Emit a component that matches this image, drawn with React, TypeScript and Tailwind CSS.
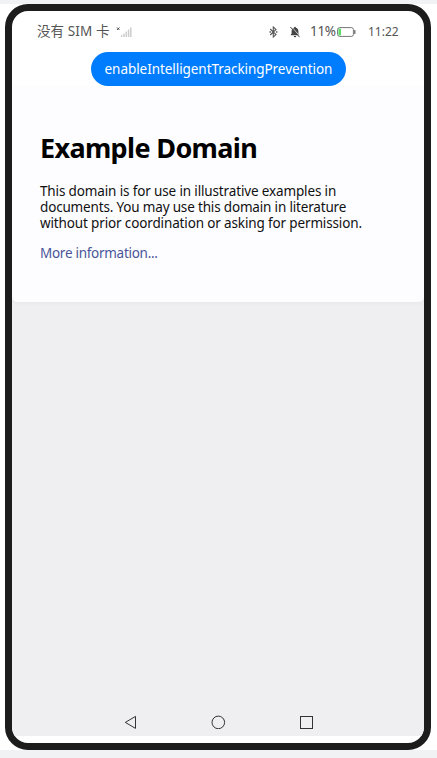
const latin = "font-['Noto_Sans','Noto_Sans_CJK_SC',sans-serif]";

function SignalIcon() {
  return (
    <svg width="16" height="12" viewBox="0 0 16 12" className="ml-[6px] mt-[1px]">
      <path d="M1 1.5l2.4 2.4M3.4 1.5L1 3.9" stroke="#444" strokeWidth="1" />
      <path d="M5.6 11V9M8 11V7.5M10.3 11V5.5M12.6 11V3.5M14.8 11V1.5" stroke="#cdcdcd" strokeWidth="1.5" />
    </svg>
  );
}

function BluetoothIcon() {
  return (
    <svg width="9" height="12" viewBox="0 0 9 12" fill="none" stroke="#555" strokeWidth="1.1">
      <path d="M1.2 3L7 8.6 4.3 11V1L7 3.4 1.2 9" />
      <path d="M0.5 6h1.4M7 6h1.4" strokeWidth="1.3" />
    </svg>
  );
}

function BellOffIcon() {
  return (
    <svg width="10" height="12" viewBox="0 0 10 12" className="ml-[12px]">
      <path d="M5 0.8c.6 0 .9.4.9.9C7.6 2.2 8.4 3.4 8.4 5v2.5L9.5 9.3H.5l1.1-1.8V5C1.6 3.4 2.4 2.2 4.1 1.7c0-.5.3-.9.9-.9zM3.8 9.9h2.4c0 .8-.5 1.3-1.2 1.3s-1.2-.5-1.2-1.3z" fill="#444" />
      <path d="M1.3 0.5l8.6 9.7" stroke="#fff" strokeWidth="0.7" />
      <path d="M0.4 1l9.2 10.2" stroke="#444" strokeWidth="1" />
    </svg>
  );
}

function BatteryIcon() {
  return (
    <svg width="19" height="10" viewBox="0 0 19 10" className="mt-[1px]">
      <rect x="0.6" y="0.6" width="15.8" height="8.8" rx="2" fill="#fff" stroke="#777" />
      <rect x="1.4" y="1.5" width="2.6" height="7" rx="0.7" fill="#5fdc68" />
      <path d="M17.8 3v4" stroke="#777" strokeWidth="1.4" />
    </svg>
  );
}

export default function App() {
  return (
    <div className={`h-[758px] w-[437px] overflow-hidden bg-[#f1f2f4] py-[4px] ${latin}`}>
      <div className="h-[746px] bg-white pl-[5px]">
        <main className="flex h-[746px] w-[426px] flex-col overflow-hidden rounded-[23px] border-[7px] border-[#1c1c1c] bg-white">
          <header className="flex h-[41px] shrink-0 items-center px-[25px] text-[13.5px] leading-none text-[#555]">
            <span className="w-[73px] whitespace-nowrap tracking-[0.1px]">没有 SIM 卡</span>
            <SignalIcon />
            <span className="grow" />
            <BluetoothIcon />
            <BellOffIcon />
            <span className="ml-[10px] w-[27px] whitespace-nowrap tracking-[-0.3px]">11%</span>
            <BatteryIcon />
            <span className="ml-[12px] w-[31px] whitespace-nowrap text-[12px]">11:22</span>
          </header>
          <button className="ml-[79px] h-[34px] w-[255px] shrink-0 whitespace-nowrap rounded-full bg-[#007dff] pt-px text-[13.5px] tracking-[-0.06px] text-white">
            enableIntelligentTrackingPrevention
          </button>
          <div className="mt-px flex h-[649px] shrink-0 flex-col bg-[#efeff1]">
            <section className="h-[215px] shrink-0 rounded-b-[5px] bg-[#fdfdff] pl-[28px] pt-[43px] shadow-[0_1px_4px_rgba(0,0,0,0.04)]">
              <h1 className="whitespace-nowrap text-[27px] font-bold leading-[36px] tracking-[-0.65px] text-black">Example Domain</h1>
              <p className="mt-[17px] whitespace-nowrap text-[13.5px] leading-[16px] text-[#111]">
                <span className="block tracking-[-0.14px]">This domain is for use in illustrative examples in</span>
                <span className="block tracking-[-0.17px]">documents. You may use this domain in literature</span>
                <span className="block tracking-[-0.14px]">without prior coordination or asking for permission.</span>
              </p>
              <a className="mt-[14px] block text-[13.5px] leading-[16px] tracking-[-0.28px] text-[#4a5599]">More information...</a>
            </section>
            <nav className="mt-auto flex h-[28px] items-start pl-[112px] pt-[7px]">
              <svg width="202" height="14" viewBox="0 0 202 14" fill="none" stroke="#333" strokeWidth="1">
                <path d="M1.3 7.4L11.5 1.4v12z" />
                <circle cx="94.3" cy="7.4" r="6.3" />
                <rect x="176.5" y="1.5" width="12" height="12" />
              </svg>
            </nav>
          </div>
        </main>
      </div>
    </div>
  );
}
